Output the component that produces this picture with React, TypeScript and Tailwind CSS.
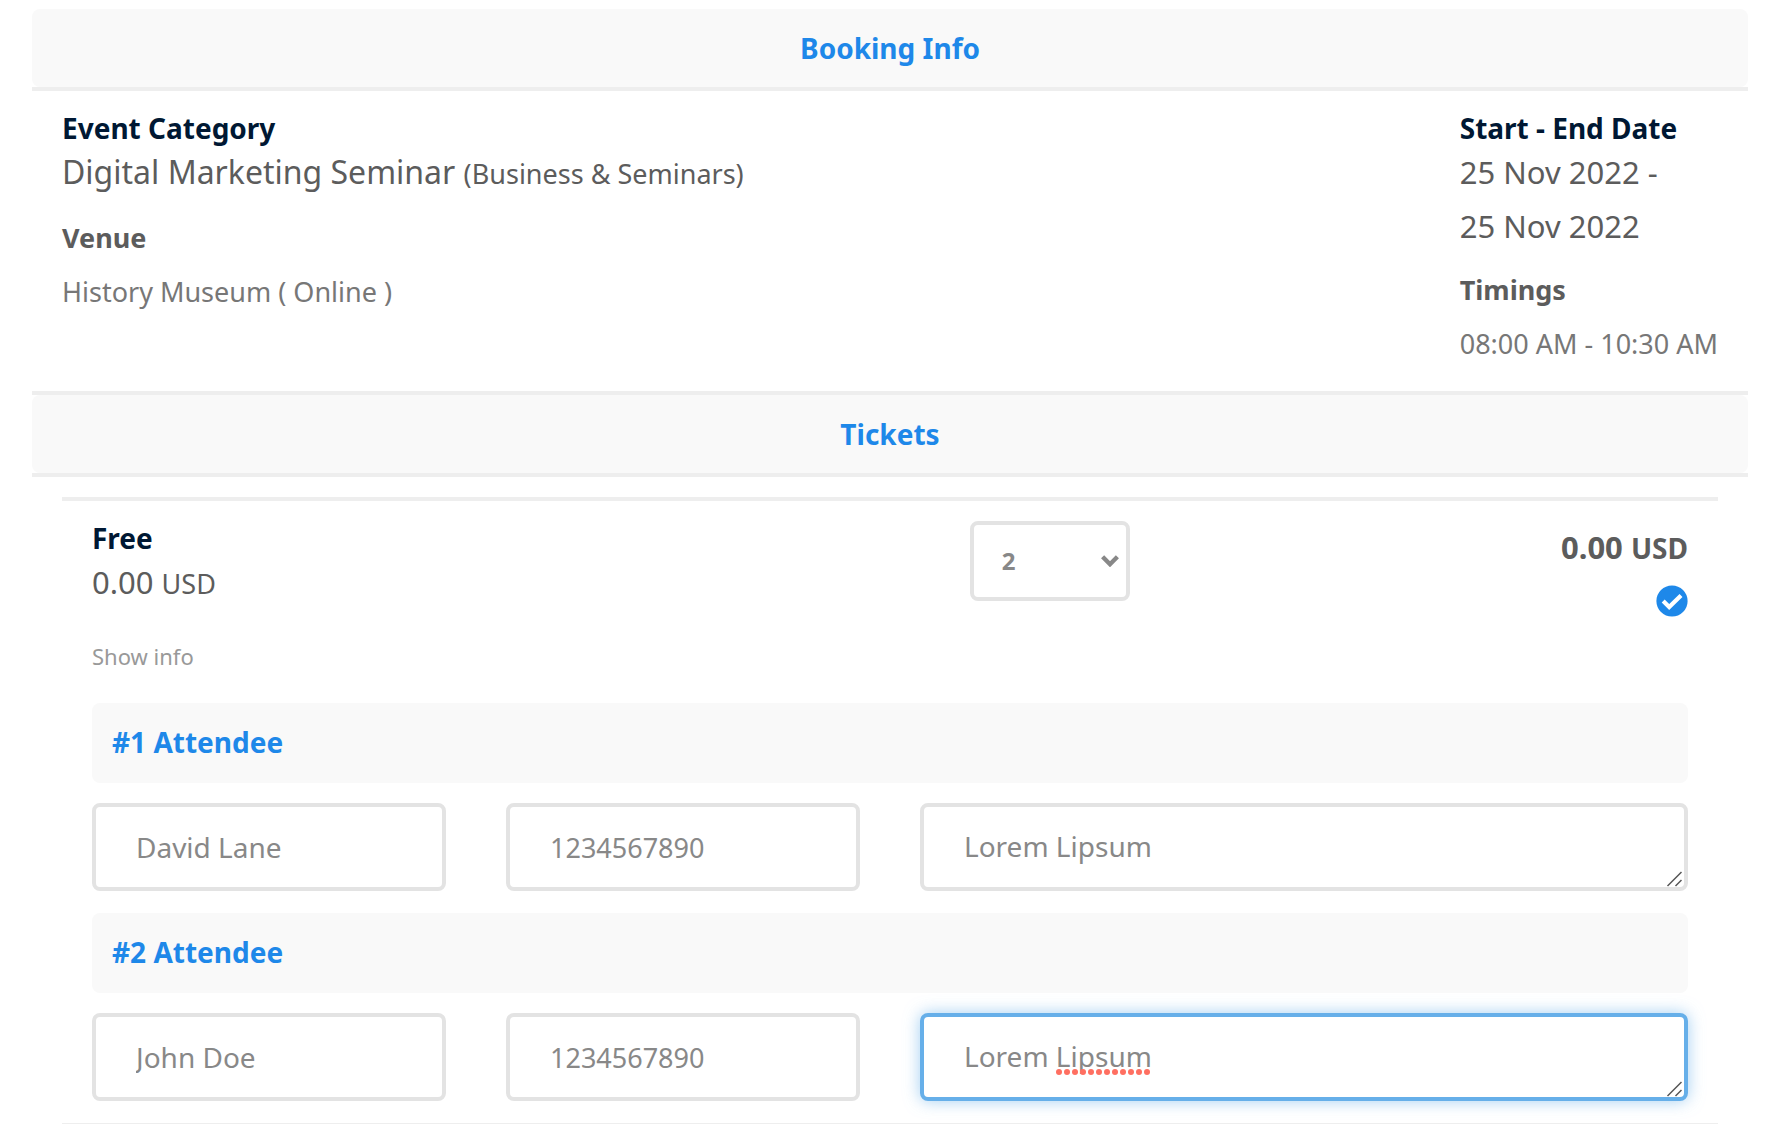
import React from "react";

const attendees = [
  { name: "David Lane", phone: "1234567890", note: "Lorem Lipsum", active: false },
  { name: "John Doe", phone: "1234567890", note: "Lorem Lipsum", active: true },
];

const fieldBase =
  "block h-[88px] w-full rounded-lg border-4 bg-white px-10 leading-[38px] text-[#888888] outline-none";

function SectionTitle({ children }: { children: React.ReactNode }) {
  return (
    <h2 className="rounded-lg bg-[#f9f9f9] py-5 text-center text-[28px] leading-[38px] font-bold text-[#1e88e9]">
      {children}
    </h2>
  );
}

function ResizeGrip() {
  return (
    <svg
      className="pointer-events-none absolute right-1.5 bottom-1 h-4 w-4"
      viewBox="0 0 16 16"
      fill="none"
      stroke="#555"
      strokeWidth="1.5"
      aria-hidden="true"
    >
      <path d="M1.5 15 15.5 1M9.5 15 15.5 9" />
    </svg>
  );
}

function SpellingMark() {
  return (
    <svg
      className="pointer-events-none absolute bottom-[26px] left-[136px] h-1.5 w-24"
      viewBox="0 0 96 6"
      fill="#ff6f61"
      aria-hidden="true"
    >
      {Array.from({ length: 12 }, (_, i) => (
        <circle key={i} cx={3 + i * 8} cy={3} r={3} />
      ))}
    </svg>
  );
}

function Attendee({ index, data }: { index: number; data: (typeof attendees)[number] }) {
  return (
    <fieldset className="mb-[22px]">
      <legend className="mb-5 w-full rounded-lg bg-[#f9f9f9] px-5 pt-[19px] pb-[21px] text-[28px] leading-10 font-bold text-[#1e88e9]">
        #{index} Attendee
      </legend>
      <div className="grid grid-cols-4 gap-[60px]">
        <input
          type="text"
          aria-label={`Attendee ${index} name`}
          defaultValue={data.name}
          className={`${fieldBase} border-[#e3e3e3] text-[28px]`}
        />
        <input
          type="tel"
          aria-label={`Attendee ${index} phone`}
          defaultValue={data.phone}
          className={`${fieldBase} border-[#e3e3e3] text-[27px]`}
        />
        <div className="relative col-span-2">
          <textarea
            aria-label={`Attendee ${index} note`}
            defaultValue={data.note}
            spellCheck={false}
            rows={1}
            className={`${fieldBase} resize-none overflow-hidden py-5 text-[28px] ${
              data.active
                ? "border-[#66afe9] shadow-[0_0_16px_rgba(102,175,233,0.6)]"
                : "border-[#e3e3e3]"
            }`}
          />
          {data.active && <SpellingMark />}
          <ResizeGrip />
        </div>
      </div>
    </fieldset>
  );
}

export default function App() {
  return (
    <main className="bg-white pt-[9px] pr-[18px] pl-8 font-['Noto_Sans',sans-serif] text-[#5c5c5c]">
      <section>
        <SectionTitle>Booking Info</SectionTitle>
        <div className="flex justify-between border-y-4 border-[#eeeeee] px-[30px] py-5 text-[27px] leading-[54px]">
          <div>
            <h3 className="text-[28px] leading-[34px] font-bold text-[#001833]">Event Category</h3>
            <p className="mb-[10px] text-[32px]">
              Digital Marketing Seminar <span className="text-[27px]">(Business &amp; Seminars)</span>
            </p>
            <h4 className="font-bold">Venue</h4>
            <p className="text-[#777777]">History Museum ( Online )</p>
          </div>
          <div>
            <h3 className="text-[28px] leading-[34px] font-bold text-[#001833]">Start - End Date</h3>
            <p className="mb-[10px] text-[31px]">
              25 Nov 2022 -<br />
              25 Nov 2022
            </p>
            <h4 className="font-bold">Timings</h4>
            <p className="text-[#777777]">08:00 AM - 10:30 AM</p>
          </div>
        </div>
      </section>

      <section>
        <SectionTitle>Tickets</SectionTitle>
        <div className="border-t-4 border-[#eeeeee] px-[30px] pt-5">
          <div className="border-t-4 border-b border-t-[#eeeeee] border-b-[#eeeeee] px-[30px] pt-5">
            <div className="flex items-start">
              <div className="w-[55%] leading-[54px]">
                <h3 className="text-[28px] leading-[34px] font-bold text-[#001833]">Free</h3>
                <p className="text-[31px]">
                  0.00 <span className="text-[27px] leading-none">USD</span>
                </p>
                <button type="button" className="my-5 block text-[22px] leading-[54px] text-[#999999]">
                  Show info
                </button>
              </div>
              <div className="relative w-40">
                <select
                  aria-label="Ticket quantity"
                  defaultValue="2"
                  className="h-20 w-full appearance-none rounded-lg border-4 border-[#e3e3e3] bg-white px-7 text-2xl font-bold text-[#888888]"
                >
                  <option>0</option>
                  <option>1</option>
                  <option>2</option>
                  <option>3</option>
                </select>
                <svg
                  className="pointer-events-none absolute top-[34px] right-[11px] h-3 w-[18px]"
                  viewBox="0 0 18 12"
                  fill="none"
                  stroke="#888888"
                  strokeWidth="4.4"
                  aria-hidden="true"
                >
                  <path d="M1.6 1.8 9 9.2 16.4 1.8" />
                </svg>
              </div>
              <div className="flex flex-1 flex-col items-end">
                <p className="text-[31px] leading-[52px] font-bold">
                  0.00 <span className="text-[28px] leading-none">USD</span>
                </p>
                <svg className="mt-3 h-8 w-8" viewBox="0 0 32 32" aria-label="Selected" role="img">
                  <circle cx="16" cy="16" r="15.6" fill="#1e88e9" />
                  <path d="M7.2 16 13.2 22 25 10.4" fill="none" stroke="#fff" strokeWidth="4.2" />
                </svg>
              </div>
            </div>
            {attendees.map((a, i) => (
              <Attendee key={a.name} index={i + 1} data={a} />
            ))}
          </div>
        </div>
      </section>
    </main>
  );
}
